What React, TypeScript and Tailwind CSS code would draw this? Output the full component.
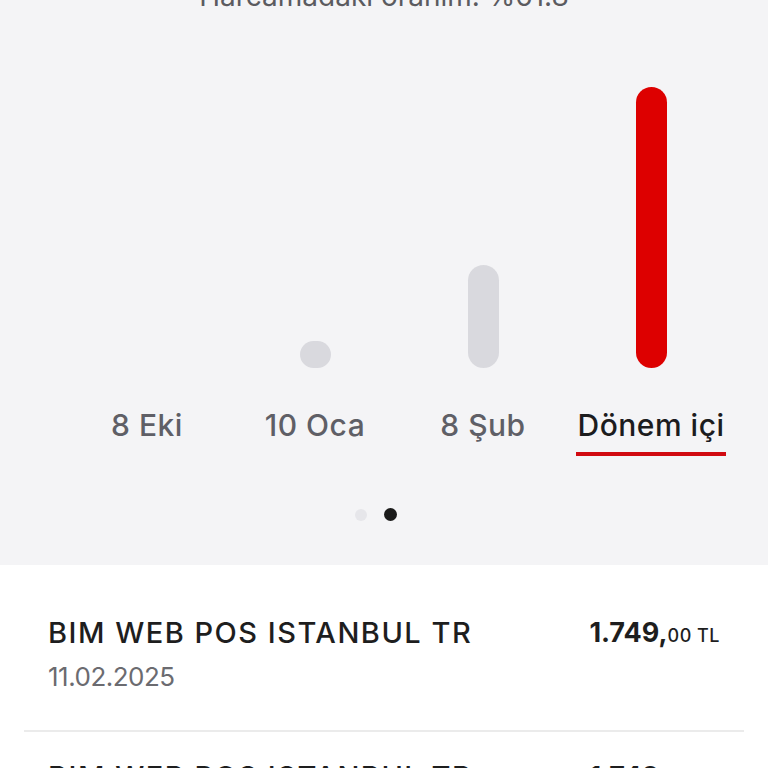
import React from "react";

interface Bar {
  label: string;
  height: number;
  active: boolean;
}

const bars: Bar[] = [
  { label: "8 Eki", height: 0, active: false },
  { label: "10 Oca", height: 27, active: false },
  { label: "8 Şub", height: 103, active: false },
  { label: "Dönem içi", height: 281, active: true },
];

const App: React.FC = () => {
  return (
    <div className="min-h-screen bg-white" style={{ fontFamily: "Inter, 'Noto Sans', sans-serif" }}>
      <section className="h-[565px] overflow-hidden bg-[#f4f4f6]">
        <p className="-mt-[16px] text-center text-[28px] leading-[24px] text-[#5b5b60]">
          Harcamadaki oranım: %61.8
        </p>

        <div className="mt-[70px] flex pl-[63px] pr-[33px]">
          {bars.map((b) => (
            <div key={b.label} className="flex w-[168px] flex-col items-center">
              <div className="flex h-[290px] items-end">
                {b.height > 0 && (
                  <div
                    className={
                      b.active
                        ? "w-[31px] rounded-full bg-[#dd0000]"
                        : "w-[31px] rounded-full bg-[#d9d9de]"
                    }
                    style={{ height: b.height }}
                  />
                )}
              </div>
              <div className="mt-[40px] flex flex-col items-center">
                <span
                  className={
                    b.active
                      ? "text-[30px] leading-[34px] font-medium tracking-[0.5px] text-[#1c1c1e]"
                      : "text-[30px] leading-[34px] font-medium tracking-[0.5px] text-[#5f5f66]"
                  }
                >
                  {b.label}
                </span>
                <div
                  className={
                    b.active
                      ? "mt-[10px] h-[4px] w-[150px] bg-[#d10a11]"
                      : "mt-[10px] h-[4px] w-[150px] bg-transparent"
                  }
                />
              </div>
            </div>
          ))}
        </div>

        <div className="mt-[52px] flex items-center justify-center gap-[17px] pr-[16px]">
          <span className="h-[12px] w-[12px] rounded-full bg-[#e6e6ea]" />
          <span className="h-[13px] w-[13px] rounded-full bg-[#1a1a1a]" />
        </div>
      </section>

      <div className="px-[24px]">
        <div className="flex items-start justify-between border-b-2 border-[#ebebeb] px-[24px] pt-[51px] pb-[38px]">
          <div>
            <p className="text-[29px] leading-[34px] font-medium tracking-[1.5px] text-[#1e1e1e]">
              BIM WEB POS ISTANBUL TR
            </p>
            <p className="mt-[12px] text-[26px] leading-[30px] tracking-[-0.5px] text-[#6b6b70]">11.02.2025</p>
          </div>
          <p className="text-[#1e1e1e]">
            <span className="text-[27px] leading-[34px] font-bold">1.749,</span>
            <span className="text-[18px] font-medium tracking-[0.5px]">00 TL</span>
          </p>
        </div>
        <div className="flex items-start justify-between px-[24px] pt-[28px]">
          <p className="text-[29px] leading-[34px] font-medium tracking-[1.5px] text-[#1e1e1e]">
            BIM WEB POS ISTANBUL TR
          </p>
          <p className="text-[#1e1e1e]">
            <span className="text-[27px] leading-[34px] font-bold">1.749,</span>
            <span className="text-[18px] font-medium tracking-[0.5px]">00 TL</span>
          </p>
        </div>
      </div>
    </div>
  );
};

export default App;
